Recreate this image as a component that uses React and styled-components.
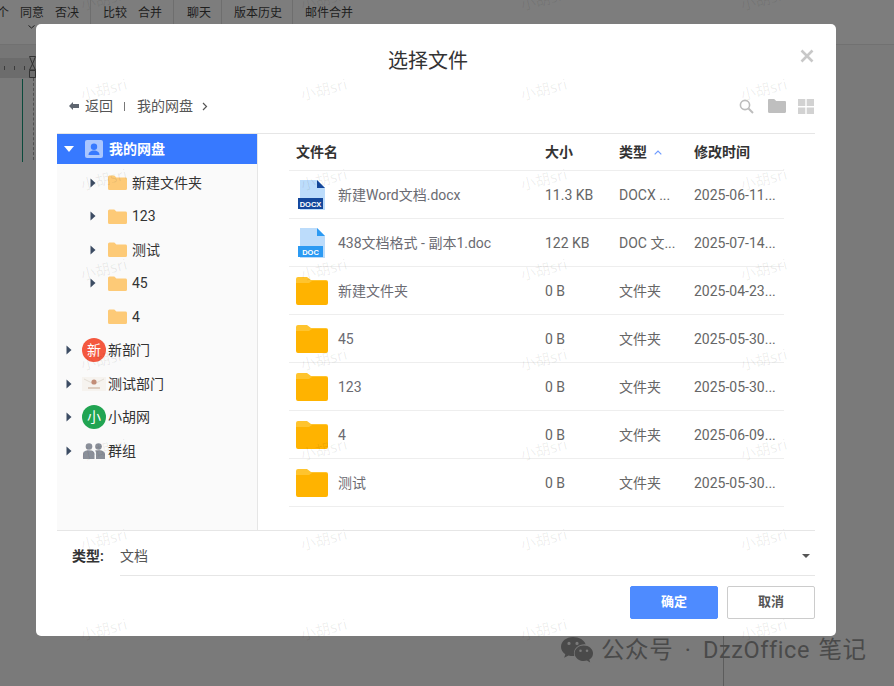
import React from 'react';
import styled, { createGlobalStyle } from 'styled-components';

const Global = createGlobalStyle`
  html, body { margin: 0; padding: 0; height: 100%; overflow: hidden; }
  body { font-family: Roboto, "Noto Sans CJK SC", sans-serif; background: #7c7c7c; }
  * { box-sizing: border-box; }
`;

const Page = styled.div`
  position: relative;
  width: 894px;
  height: 686px;
  overflow: hidden;
  background: #7a7a7a;
`;

const Ribbon = styled.div`
  height: 45px;
  background: #7d7d7d;
  border-bottom: 1px solid #717171;
  display: flex;
  align-items: flex-start;
  padding-top: 5px;
  font-size: 12px;
  color: #1e1e1e;
  line-height: 16px;
`;
const RibbonGroup = styled.div`
  display: flex;
  gap: ${p => p.$gap || 0}px;
  height: 30px;
  width: ${p => p.$w}px;
  padding-left: ${p => p.$pl || 0}px;
  margin-left: ${p => p.$ml || 0}px;
  border-right: 1px solid ${p => (p.$last ? 'transparent' : '#6e6e6e')};
  margin-top: -5px;
  padding-top: 5px;
  flex: none;
`;
const RibbonChevron = styled.svg`
  position: absolute;
  left: 28px;
  top: 25px;
`;

const Upper = styled.div`
  height: 13px;
  width: 36px;
  background: #767676;
`;
const RulerBar = styled.div`
  height: 20px;
  width: 36px;
  background: #6c6c6c;
  display: flex;
  align-items: center;
  gap: 9px;
  padding-left: 4px;
`;
const Tick = styled.span`
  width: 1px;
  height: 4px;
  background: #3c3c3c;
`;
const MarginLine = styled.div`
  margin: 1px 0 0 22px;
  width: 1px;
  height: 83px;
  background: #0b4a3c;
`;
const RulerMark = styled.svg`
  position: absolute;
  left: 29px;
  top: 56px;
`;
const DashLine = styled.div`
  position: absolute;
  left: 33px;
  top: 78px;
  height: 82px;
  border-left: 1px dashed #4f4f4f;
`;
const BottomLine = styled.div`
  position: absolute;
  left: 723px;
  top: 636px;
  width: 1px;
  height: 50px;
  background: #5c5c5c;
`;

const Dialog = styled.div`
  position: absolute;
  left: 36px;
  top: 24px;
  width: 800px;
  height: 612px;
  background: #fff;
  border-radius: 5px;
  display: flex;
  flex-direction: column;
  padding: 0 21px;
  color: #333;
`;
const Header = styled.div`
  height: 62px;
  display: flex;
  align-items: center;
  justify-content: center;
  font-size: 20px;
  line-height: 28px;
  color: #333;
  padding: 11px 16px 0 0;
  position: relative;
`;
const Close = styled.svg`
  position: absolute;
  right: 1px;
  top: 25px;
`;
const Toolbar = styled.div`
  height: 47px;
  display: flex;
  align-items: center;
  font-size: 14px;
  line-height: 20px;
  color: #555;
  padding: 0 1px 7px 12px;
`;
const Crumb = styled.span`
  margin-left: ${p => p.$ml || 0}px;
`;
const Sep = styled.span`
  width: 1px;
  height: 9px;
  background: #777;
  margin-left: 11px;
`;
const ToolIcons = styled.div`
  margin-left: auto;
  display: flex;
  align-items: center;
  gap: 12px;
`;
const SearchIcon = styled.svg`
  margin-right: 2px;
`;
const Body = styled.div`
  height: 398px;
  border-top: 1px solid #e6e6e6;
  border-bottom: 1px solid #e6e6e6;
  display: flex;
`;
const Sidebar = styled.div`
  width: 201px;
  flex: none;
  background: #fafafa;
  border-right: 1px solid #e6e6e6;
  display: flex;
  flex-direction: column;
  gap: 3.5px;
`;
const TreeRow = styled.div`
  height: 30px;
  flex: none;
  display: flex;
  align-items: center;
  padding-left: ${p => p.$indent}px;
  font-size: 14px;
  line-height: 20px;
  color: ${p => (p.$active ? '#fff' : '#333')};
  background: ${p => (p.$active ? '#3779ff' : 'transparent')};
  font-weight: ${p => (p.$active ? 600 : 400)};
`;
const Arrow = styled.svg`
  flex: none;
  width: 6px;
  height: 10px;
  margin-right: ${p => p.$mr}px;
  visibility: ${p => (p.$hidden ? 'hidden' : 'visible')};
`;
const TreeLabel = styled.span`
  margin-left: ${p => p.$ml}px;
`;
const Avatar = styled.span`
  width: 24px;
  height: 24px;
  border-radius: 50%;
  flex: none;
  background: ${p => p.$bg};
  color: #fff;
  font-size: 14px;
  display: flex;
  align-items: center;
  justify-content: center;
`;
const Main = styled.div`
  flex: 1;
  padding: 0 31px 0 31px;
`;
const GridRow = styled.div`
  display: grid;
  grid-template-columns: 249px 74px 75px 97px;
  height: ${p => p.$h}px;
  align-items: center;
  border-bottom: 1px solid #eeeeee;
  font-size: 14px;
  line-height: 20px;
  color: #666;
`;
const HeadCell = styled.div`
  padding-left: 7px;
  font-weight: 600;
  color: #333;
  display: flex;
  align-items: center;
`;
const NameCell = styled.div`
  display: flex;
  align-items: center;
  padding-left: ${p => p.$pl}px;
`;
const NameText = styled.span`
  margin-left: ${p => p.$ml}px;
  color: #6b6b72;
`;
const Cell = styled.div`
  padding-left: 7px;
  white-space: nowrap;
`;
const TypeRow = styled.div`
  height: 45px;
  display: flex;
  align-items: stretch;
  padding-left: 15px;
  font-size: 14px;
  line-height: 20px;
`;
const TypeLabel = styled.span`
  font-weight: 600;
  width: 48px;
  color: #333;
  padding-top: 15px;
`;
const TypeSelect = styled.div`
  flex: 1;
  border-bottom: 1px solid #e6e6e6;
  display: flex;
  align-items: center;
  justify-content: space-between;
  color: #555;
  padding: 5px 5px 0 0;
`;
const Footer = styled.div`
  display: flex;
  justify-content: flex-end;
  gap: 9px;
  margin-top: 10px;
`;
const Button = styled.button`
  width: 88px;
  height: 33px;
  border-radius: 2px;
  font: 600 13px Roboto, "Noto Sans CJK SC", sans-serif;
  line-height: 18px;
  background: ${p => (p.$primary ? '#4e8bff' : '#fff')};
  color: ${p => (p.$primary ? '#fff' : '#555')};
  border: 1px solid ${p => (p.$primary ? '#4e8bff' : '#cccccc')};
  padding: 0 0 2px;
`;

const WatermarkLayer = styled.div`
  position: absolute;
  inset: 0;
  pointer-events: none;
`;
const Mark = styled.span`
  position: absolute;
  font-family: "Noto Sans", "Noto Sans CJK SC", sans-serif;
  font-size: 15px;
  line-height: 18px;
  color: rgba(0, 0, 0, 0.07);
  transform: rotate(-14deg);
  white-space: nowrap;
`;
const Brand = styled.div`
  position: absolute;
  left: 561px;
  top: 634px;
  display: flex;
  align-items: center;
  gap: 8px;
  font-size: 23.5px;
  letter-spacing: 0.6px;
  word-spacing: 2px;
  color: #4a4a4a;
  line-height: 32px;
  white-space: nowrap;
`;
const BrandDot = styled.span`
  margin: 0 3px;
`;

const TriRight = ({ mr }) => (
  <Arrow $mr={mr} viewBox="0 0 6 10"><path d="M0.5 0.5 5.500 5 0.5 9.500z" fill="#3c4c63" /></Arrow>
);
const NoArrow = ({ mr }) => <Arrow $mr={mr} $hidden viewBox="0 0 6 10" />;

const TreeFolder = () => (
  <svg width="19" height="15" viewBox="0 0 19 15" style={{ flex: 'none' }}>
    <path d="M0 2a1.500 1.500 0 0 1 1.500-1.500h4.800L8.400 2.600h9.100A1.500 1.500 0 0 1 19 4v9.500a1.500 1.500 0 0 1-1.500 1.500h-16A1.500 1.500 0 0 1 0 13.500z" fill="#fdca77" />
  </svg>
);

const BigFolder = () => (
  <svg width="32" height="28" viewBox="0 0 32 28" style={{ flex: 'none' }}>
    <path d="M0 2a2 2 0 0 1 2-2h9l4 3h15a2 2 0 0 1 2 2v5H0z" fill="#ffc42e" />
    <path d="M0 6h13l3-2h14a2 2 0 0 1 2 2v20a2 2 0 0 1-2 2H2a2 2 0 0 1-2-2z" fill="#ffb300" />
  </svg>
);

const DocIcon = ({ dark, label }) => (
  <svg width="28" height="30" viewBox="0 0 28 30" style={{ flex: 'none' }}>
    <path d="M2 0h17l8 8v22H2z" fill="#bcdcfb" />
    <path d="M19 0l8 8h-8z" fill={dark} />
    <rect x="0" y="18" width="25" height="11" fill={dark} />
    <text x="12.500" y="26.600" textAnchor="middle" fontSize="7.500" fontWeight="700" fontFamily="Liberation Sans, sans-serif" fill="#fff">{label}</text>
  </svg>
);

const tree = [
  ['新建文件夹', true],
  ['123', true],
  ['测试', true],
  ['45', true],
  ['4', false],
];

const files = [
  { name: '新建Word文档.docx', size: '11.3 KB', type: 'DOCX ...', time: '2025-06-11...', icon: 'docx' },
  { name: '438文档格式 - 副本1.doc', size: '122 KB', type: 'DOC 文...', time: '2025-07-14...', icon: 'doc' },
  { name: '新建文件夹', size: '0 B', type: '文件夹', time: '2025-04-23...' },
  { name: '45', size: '0 B', type: '文件夹', time: '2025-05-30...' },
  { name: '123', size: '0 B', type: '文件夹', time: '2025-05-30...' },
  { name: '4', size: '0 B', type: '文件夹', time: '2025-06-09...' },
  { name: '测试', size: '0 B', type: '文件夹', time: '2025-05-30...' },
];

const marks = [];
[-2, 88, 178, 268, 358, 448, 538, 628].forEach(y => {
  [80, 300, 520, 740].forEach(x => marks.push([x, y]));
});

export default function App() {
  return (
    <Page>
      <Global />
      <Ribbon>
        <RibbonGroup $w={94} $ml={-3} $gap={11}><span>个</span><span>同意</span><span>否决</span></RibbonGroup>
        <RibbonGroup $w={83} $pl={12} $gap={11}><span>比较</span><span>合并</span></RibbonGroup>
        <RibbonGroup $w={48} $pl={13}><span>聊天</span></RibbonGroup>
        <RibbonGroup $w={71} $pl={12}><span>版本历史</span></RibbonGroup>
        <RibbonGroup $w={80} $pl={12} $last><span>邮件合并</span></RibbonGroup>
      </Ribbon>
      <RibbonChevron width="7" height="4" viewBox="0 0 7 4"><path d="M.5.5 3.500 3 6.500.5" fill="none" stroke="#222" /></RibbonChevron>
      <Upper />
      <RulerBar>
        <Tick /><Tick /><Tick />
      </RulerBar>
      <RulerMark width="7" height="22" viewBox="0 0 7 22">
        <path d="M.5.5h6L3.500 8 .5.5zM3.500 8l3 6H.5zM.5 14.500h6v7h-6z" fill="none" stroke="#333" />
      </RulerMark>
      <MarginLine />
      <DashLine />
      <BottomLine />

      <Dialog>
        <Header>
          选择文件
          <Close width="14" height="14" viewBox="0 0 14 14">
            <path d="M1.500 1.500 12.500 12.500M12.500 1.500 1.500 12.500" stroke="#c8c8c8" strokeWidth="2.600" />
          </Close>
        </Header>
        <Toolbar>
          <svg width="10" height="8" viewBox="0 0 10 8"><path d="M0 4 4 0v2h6v4H4v2z" fill="#5f6670" /></svg>
          <Crumb $ml={6}>返回</Crumb>
          <Sep />
          <Crumb $ml={12}>我的网盘</Crumb>
          <svg width="6" height="9" viewBox="0 0 6 9" style={{ marginLeft: 9 }}><path d="M1 1 4.500 4.500 1 8" fill="none" stroke="#555" strokeWidth="1.200" /></svg>
          <ToolIcons>
            <SearchIcon width="15" height="15" viewBox="0 0 15 15"><circle cx="6" cy="6" r="4.600" fill="none" stroke="#bdbdbd" strokeWidth="1.600" /><path d="M9.500 9.500 14 14" stroke="#bdbdbd" strokeWidth="2" /></SearchIcon>
            <svg width="18" height="14" viewBox="0 0 18 14"><path d="M0 1.200C0 .5.5 0 1.200 0h5l2 2h8.600c.7 0 1.200.5 1.200 1.200v9.600c0 .7-.5 1.200-1.200 1.200H1.200C.5 14 0 13.500 0 12.800z" fill="#bfbfbf" /></svg>
            <svg width="16" height="15" viewBox="0 0 16 15"><path d="M0 0h7.300v7H0zM8.700 0H16v7H8.700zM0 8.400h7.300V15H0zM8.700 8.400H16V15H8.700z" fill="#d2d2d2" /></svg>
          </ToolIcons>
        </Toolbar>
        <Body>
          <Sidebar>
            <TreeRow $active $indent={7}>
              <svg width="10" height="6" viewBox="0 0 10 6" style={{ flex: 'none' }}><path d="M0 0h10L5 6z" fill="#fff" /></svg>
              <svg width="18" height="18" viewBox="0 0 18 18" style={{ marginLeft: 11, flex: 'none' }}>
                <rect width="18" height="18" rx="2" fill="#a9c6ff" />
                <circle cx="9" cy="6.800" r="3.200" fill="#3779ff" />
                <path d="M3.500 15c0-3 2.500-4.500 5.500-4.500s5.500 1.500 5.500 4.500z" fill="#3779ff" />
              </svg>
              <TreeLabel $ml={6}>我的网盘</TreeLabel>
            </TreeRow>
            {tree.map(([label, hasArrow]) => (
              <TreeRow key={label} $indent={33}>
                {hasArrow ? <TriRight mr={12} /> : <NoArrow mr={12} />}
                <TreeFolder />
                <TreeLabel $ml={5}>{label}</TreeLabel>
              </TreeRow>
            ))}
            <TreeRow $indent={9}>
              <TriRight mr={10} />
              <Avatar $bg="#f4583f">新</Avatar>
              <TreeLabel $ml={2}>新部门</TreeLabel>
            </TreeRow>
            <TreeRow $indent={9}>
              <TriRight mr={10} />
              <svg width="24" height="14" viewBox="0 0 24 14" style={{ flex: 'none' }}>
                <rect width="24" height="14" fill="#f6f3ef" />
                <path d="M2 2 10 6M22 2 14 6" stroke="#e3ddd4" />
                <circle cx="12" cy="5" r="2.600" fill="#c28d78" />
                <path d="M6 11h12" stroke="#d8c4b4" strokeWidth="1.600" />
              </svg>
              <TreeLabel $ml={2}>测试部门</TreeLabel>
            </TreeRow>
            <TreeRow $indent={9}>
              <TriRight mr={10} />
              <Avatar $bg="#21a452">小</Avatar>
              <TreeLabel $ml={2}>小胡网</TreeLabel>
            </TreeRow>
            <TreeRow $indent={9}>
              <TriRight mr={10} />
              <svg width="24" height="16" viewBox="0 0 24 16" style={{ flex: 'none' }}>
                <circle cx="7" cy="3.500" r="3.300" fill="#8a8f99" />
                <circle cx="16.500" cy="3.500" r="3.300" fill="#8a8f99" />
                <path d="M1 16V11c0-2.500 2.500-3.800 6-3.800s5.500 1.300 5.500 3.800v5z" fill="#8a8f99" />
                <path d="M14 16v-6c0-1-.4-2-1-2.600 1-.2 2.400-.2 3.500-.2 3.500 0 6.500 1.300 6.500 3.800v5z" fill="#8a8f99" />
              </svg>
              <TreeLabel $ml={2}>群组</TreeLabel>
            </TreeRow>
          </Sidebar>
          <Main>
            <GridRow $h={37}>
              <HeadCell>文件名</HeadCell>
              <HeadCell>大小</HeadCell>
              <HeadCell>
                类型
                <svg width="8" height="5" viewBox="0 0 8 5" style={{ marginLeft: 7 }}><path d="M.7 4.300 4 1l3.300 3.300" fill="none" stroke="#6d9bff" strokeWidth="1.200" /></svg>
              </HeadCell>
              <HeadCell>修改时间</HeadCell>
            </GridRow>
            {files.map(f => (
              <GridRow key={f.name} $h={48}>
                {f.icon ? (
                  <NameCell $pl={9}>
                    {f.icon === 'docx' ? <DocIcon dark="#14489c" label="DOCX" /> : <DocIcon dark="#2b9af3" label="DOC" />}
                    <NameText $ml={12}>{f.name}</NameText>
                  </NameCell>
                ) : (
                  <NameCell $pl={7}>
                    <BigFolder />
                    <NameText $ml={10}>{f.name}</NameText>
                  </NameCell>
                )}
                <Cell>{f.size}</Cell>
                <Cell>{f.type}</Cell>
                <Cell>{f.time}</Cell>
              </GridRow>
            ))}
          </Main>
        </Body>
        <TypeRow>
          <TypeLabel>类型:</TypeLabel>
          <TypeSelect>
            文档
            <svg width="8" height="4" viewBox="0 0 8 4"><path d="M0 0h8L4 4z" fill="#555" /></svg>
          </TypeSelect>
        </TypeRow>
        <Footer>
          <Button $primary>确定</Button>
          <Button>取消</Button>
        </Footer>
      </Dialog>

      <WatermarkLayer>
        {marks.map(([x, y]) => (
          <Mark key={`${x}-${y}`} style={{ left: x, top: y - 8 }}>小胡sri</Mark>
        ))}
      </WatermarkLayer>

      <Brand>
        <svg width="32" height="26" viewBox="0 0 32 26">
          <path fillRule="evenodd" d="M12 0C5.400 0 0 4.300 0 9.700c0 3 1.700 5.700 4.300 7.500L3.200 20.800l4.300-2.300c1.400.4 2.900.6 4.500.6.400 0 .9 0 1.300-.1-.3-.9-.4-1.800-.4-2.700 0-5 4.700-9 10.500-9 .4 0 .8 0 1.200.1C23.500 3.100 18.200 0 12 0zM8 4.800a1.600 1.600 0 1 1 0 3.200 1.600 1.600 0 0 1 0-3.200zM16 4.800a1.600 1.600 0 1 1 0 3.200 1.600 1.600 0 0 1 0-3.200z" fill="#4a4a4a" />
          <path fillRule="evenodd" d="M32 16.300c0-4.300-4.100-7.800-9.200-7.800s-9.200 3.500-9.200 7.800 4.100 7.800 9.200 7.800c1.100 0 2.100-.2 3.100-.5l3.300 1.900-.9-3c2.800-1.500 3.700-3.600 3.700-6.200zM19.500 12.500a1.300 1.300 0 1 1 0 2.600 1.300 1.300 0 0 1 0-2.600zM26 12.500a1.300 1.300 0 1 1 0 2.600 1.300 1.300 0 0 1 0-2.600z" fill="#4a4a4a" />
        </svg>
        <span>公众号 <BrandDot>·</BrandDot> DzzOffice 笔记</span>
      </Brand>
    </Page>
  );
}
